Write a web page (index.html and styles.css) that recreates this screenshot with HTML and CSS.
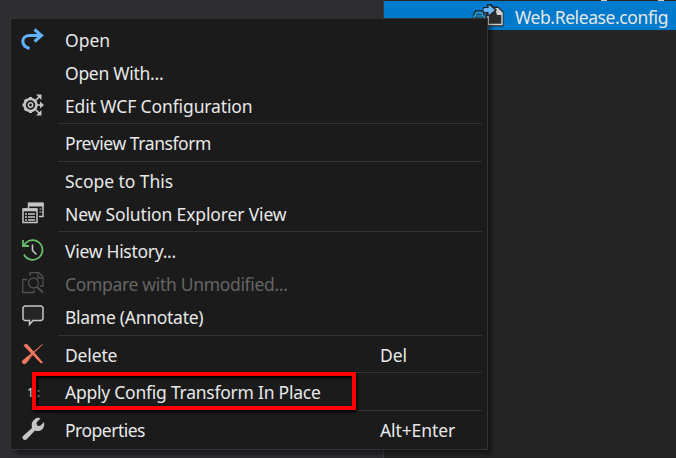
FILE: index.html
```
<!DOCTYPE html>
<html lang="en">
<head>
<meta charset="utf-8">
<title>Solution Explorer</title>
<link rel="stylesheet" href="styles.css">
</head>
<body>
<div class="workspace">
  <div class="editor"></div>
  <div class="explorer">
    <div class="previous"><i></i><i></i></div>
    <div class="file">
      <svg class="lock" width="14" height="12" viewBox="0 0 14 12"><path d="M3 6V3.500Q3 1 7 1t4 2.500V6M2 6h10v6H2z" fill="none" stroke="#16384e" stroke-width="3"/><path d="M3.500 6V4Q4 2 7 2t3.500 2v2M2 6h10v5H2z" fill="none" stroke="#35a9d6" stroke-width="1.200"/></svg>
      <svg class="file-icon" width="22" height="24" viewBox="0 0 22 24"><path d="M5 2.500h10l5.500 5V22.500H3V9z" fill="#252526"/><path d="M14 4.500l5 5V20.500H5V11" fill="#2c2c2f" stroke="#d0d0d0" stroke-width="1.400"/><path d="M12 4h3l4.500 4.500V11H14z" fill="#d0d0d0"/><path d="M0 3h4V0h4l6 6-6 6H4V9H0z" fill="#252526"/><path d="M1 4.500h5V1.500L11.500 6 6 10.500V7.500H1z" fill="#6cb8ff" stroke="#6cb8ff" stroke-width=".8"/></svg>
      <span>Web.Release.config</span>
    </div>
  </div>
</div>
<div class="menu">
  <div class="item"><svg viewBox="0 0 24 24"><path d="M8.500 21.500C-.5 19-.5 8.500 9 8.500h12M13.500 2.500l7 6-7 6" fill="none" stroke="#61b2fa" stroke-width="3"/></svg><span class="w-open">Open</span></div>
  <div class="item"><svg></svg><span class="w-with">Open With...</span></div>
  <div class="item"><svg viewBox="0 0 24 24"><g fill="none" stroke="#c5c5c5"><circle cx="9.500" cy="12" r="6" stroke-width="2.500"/><circle cx="9.500" cy="12" r="2.200" stroke-width="1.500"/><path d="M9.500 4v2M9.500 18v2M1.500 12h2M4 6.500l1.500 1.500M4 17.500l1.500-1.500" stroke-width="3"/><path d="M14 8l5-5M14 16l5 5M16 12h5" stroke-width="1.700"/></g><path d="M15 1.500h5.500V7zM15 22.500h5.500V17zM19 8.500l4 3.500-4 3.500z" fill="#c5c5c5"/></svg><span class="w-edit">Edit WCF Configuration</span></div>
  <div class="separator"></div>
  <div class="item"><svg></svg><span class="w-preview">Preview Transform</span></div>
  <div class="separator"></div>
  <div class="item"><svg></svg><span class="w-scope">Scope to This</span></div>
  <div class="item"><svg viewBox="0 0 24 24"><path d="M7.500 7V2.500H22V15.500H18" fill="none" stroke="#c5c5c5" stroke-width="1.500"/><path d="M7 1.500h15.500v4H7z" fill="#c5c5c5"/><path d="M18.500 8h2M18.500 11h2" stroke="#c5c5c5" stroke-width="1.200"/><path d="M2 8h14v13.500H2z" fill="#1b1b1c" stroke="#c5c5c5" stroke-width="1.500"/><path d="M2 7.300h14v3H2z" fill="#c5c5c5"/><path d="M4 13h2m1 0h7M4 16h2m1 0h7M4 19h2m1 0h7" stroke="#c5c5c5" stroke-width="1.300"/></svg><span class="w-new">New Solution Explorer View</span></div>
  <div class="separator"></div>
  <div class="item"><svg viewBox="0 0 24 24"><path d="M3 7.500A9.800 9.800 0 1 1 3 16.500M2 2v6h6" fill="none" stroke="#67bd68" stroke-width="1.800"/><path d="M11.500 6.500v6l4 4" fill="none" stroke="#c5c5c5" stroke-width="1.600"/></svg><span class="w-history">View History...</span></div>
  <div class="item disabled"><svg viewBox="0 0 24 24"><g fill="none" stroke="#505050" stroke-width="1.300"><path d="M6 8.500H1.700V21.500H13V19M9 5V1.700h9l4 4V15h-3M17 2v5h5"/><circle cx="12.500" cy="12" r="5"/><path d="M16 16l6 5.500" stroke-width="2"/></g></svg><span class="w-compare">Compare with Unmodified...</span></div>
  <div class="item"><svg viewBox="0 0 24 24"><path d="M3.500 2h17L22 3.500v11.500L20.500 16.500H12L8.500 20.500V16.500h-5L2 15V3.500z" fill="#252526" stroke="#c5c5c5" stroke-width="1.500"/></svg><span class="w-blame">Blame (Annotate)</span></div>
  <div class="separator"></div>
  <div class="item"><svg viewBox="0 0 24 24"><path d="M3 3.500Q5 1 7 3.500L21.500 20.500 20 21z" fill="#ef7761" stroke="#ef7761"/><path d="M21.500 2.500Q13 9 6 20q-2 3-4.500 1Q0 19.500 3.500 17 13 10 21.500 2.500z" fill="#ef7761" stroke="#ef7761" stroke-width=".8"/></svg><span class="w-delete">Delete</span><kbd>Del</kbd></div>
  <div class="separator"></div>
  <div class="item"><b class="number">1:</b><span class="w-apply">Apply Config Transform In Place</span></div>
  <div class="separator"></div>
  <div class="item"><svg viewBox="0 0 24 24"><path d="M2 19L11 11Q9.500 5 14 2q3-2 5.500-.5L15.500 5.500l.5 3 3 .5L23 5q1 5-2 7.500-3 2.500-7 1L5.500 22.500q-2 1-3.500-.5-1.500-1.500 0-3z" fill="#c5c5c5"/></svg><span class="w-properties">Properties</span><kbd>Alt+Enter</kbd></div>
</div>
<div class="highlight"></div>
</body>
</html>
```

FILE: styles.css
```
* { box-sizing: border-box; }
body {
  margin: 0;
  overflow: hidden;
  background: #252526;
  color: #e8e8e8;
  font: 17.5px/33px "Noto Sans", "Open Sans", sans-serif;
}
.workspace { display: flex; height: 458px; }
.editor { width: 384px; background: #2d2d30; border-right: 1px solid #3b3b40; }
.explorer { flex: 1; border-bottom: 1px solid #1e1e1e; }
.previous { display: flex; height: 1px; padding-left: 217px; gap: 51px; }
.previous i { width: 6px; background: #d0d0d0; }
.file {
  position: relative;
  display: flex;
  height: 29px;
  padding-left: 131px;
  background: #007acc;
  line-height: 32px;
  white-space: nowrap;
}
.file span { letter-spacing: -.4px; }
.lock { position: absolute; left: 88px; top: 9px; }
.file-icon { position: absolute; left: 99px; top: 3px; }
.menu {
  position: absolute;
  left: 10px;
  top: 18px;
  width: 478px;
  height: 432px;
  padding: 4px 5px 0 11px;
  border: 1px solid #333337;
  background: #1b1b1c;
  box-shadow: 5px 5px 5px -1px rgba(0, 0, 0, .45);
}
.item { display: flex; align-items: center; height: 33px; white-space: nowrap; }
.item svg { width: 24px; height: 24px; margin: -2px 20px 0 -1px; flex: none; }
.item span { width: 315px; padding-top: 1px; flex: none; }
.item kbd { padding-top: 1px; font: inherit; letter-spacing: -.1px; }
.number { width: 43px; padding-left: 5px; font-size: 12px; font-weight: 400; letter-spacing: 3px; }
.disabled { color: #656565; }
.w-with { letter-spacing: -.28px; }
.w-edit { letter-spacing: -.12px; }
.w-preview { letter-spacing: -.42px; }
.w-scope { letter-spacing: -.05px; }
.w-new { letter-spacing: -.14px; }
.w-history { letter-spacing: -.28px; }
.w-compare { letter-spacing: -.32px; }
.w-blame { letter-spacing: -.28px; }
.w-delete { letter-spacing: -.15px; }
.w-apply { letter-spacing: -.24px; }
.w-properties { letter-spacing: -.5px; }
.separator { height: 4.5px; margin-left: 36px; padding-top: 1px; }
.separator::before { content: ""; display: block; height: 1px; background: #333337; }
.highlight {
  position: absolute;
  left: 32px;
  top: 372px;
  width: 324px;
  height: 38px;
  border: 4px solid #f00;
  box-shadow: 1px 2px 3px #000, inset 2px 2px 3px #000;
}
```
